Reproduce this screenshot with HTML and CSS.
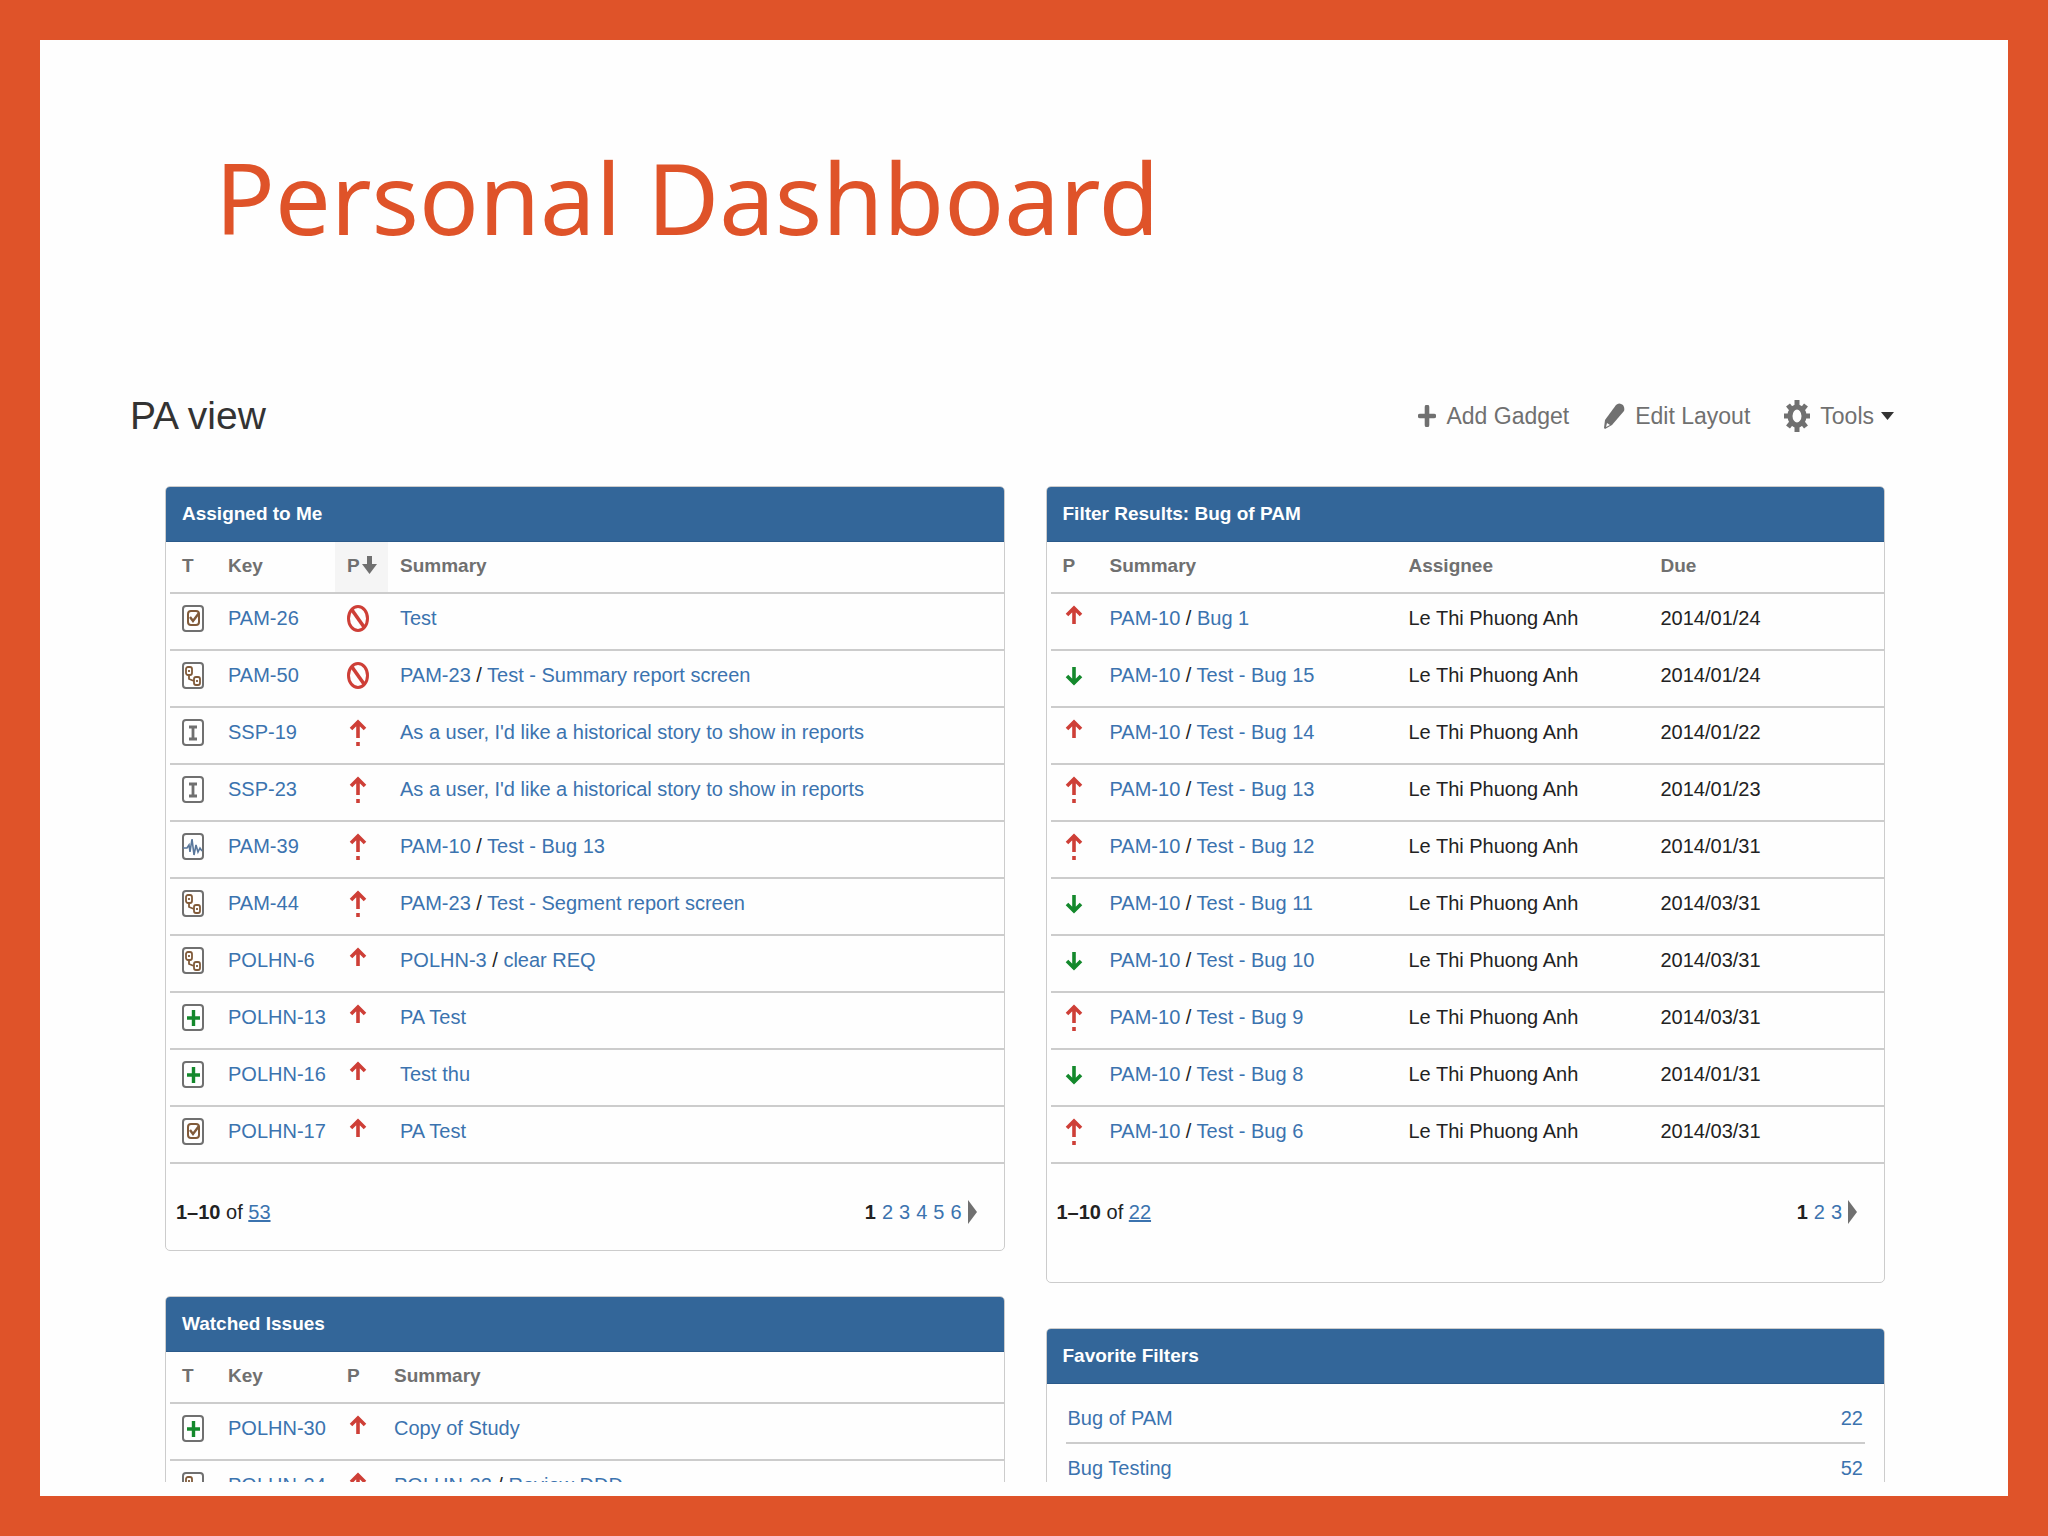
FILE: index.html
```html
<!DOCTYPE html>
<html lang="en">
<head>
    <meta charset="UTF-8">
    <meta name="viewport" content="width=device-width, initial-scale=1.0">
    <title>Personal Dashboard</title>
    <link rel="stylesheet" href="styles.css">
</head>
<body>

    <!-- icon set -->
    <svg class="sprite" aria-hidden="true">
        <symbol id="task" viewBox="0 0 22 27">
            <rect x="1" y="1" width="20" height="25" rx="3" fill="#fff" stroke="#707070" stroke-width="2"/>
            <rect x="6" y="6" width="11" height="14" rx="3" fill="none" stroke="#815b3a" stroke-width="2"/>
            <path d="M8 12l3 4 6-8" fill="none" stroke="#815b3a" stroke-width="2.4"/>
        </symbol>
        <symbol id="subtask" viewBox="0 0 22 27">
            <rect x="1" y="1" width="20" height="25" rx="3" fill="#fff" stroke="#707070" stroke-width="2"/>
            <rect x="4" y="5" width="6" height="8" rx="2" fill="none" stroke="#815b3a" stroke-width="1.8"/>
            <rect x="12" y="15" width="6" height="8" rx="2" fill="none" stroke="#815b3a" stroke-width="1.8"/>
            <path d="M7 13v4l5 2M7 8v2M15 18v2" fill="none" stroke="#815b3a" stroke-width="1.8"/>
        </symbol>
        <symbol id="story" viewBox="0 0 22 27">
            <rect x="1" y="1" width="20" height="25" rx="3" fill="#fff" stroke="#707070" stroke-width="2"/>
            <path d="M7 8h8M7 20h8M11 8v12" fill="none" stroke="#707070" stroke-width="2.8"/>
        </symbol>
        <symbol id="pulse" viewBox="0 0 22 27">
            <rect x="1" y="1" width="20" height="25" rx="3" fill="#fff" stroke="#707070" stroke-width="2"/>
            <path d="M1 15h4l2-3 1 7 2-13 2 16 2-10 2 7 2-4 2 3" fill="none" stroke="#59779b" stroke-width="1.6"/>
        </symbol>
        <symbol id="plus" viewBox="0 0 22 27">
            <rect x="1" y="1" width="20" height="25" rx="3" fill="#fff" stroke="#707070" stroke-width="2"/>
            <path d="M5 14h13M11.5 6v16" fill="none" stroke="#14892c" stroke-width="3.4"/>
        </symbol>
        <symbol id="blocker" viewBox="0 0 22 27">
            <ellipse cx="11" cy="13.5" rx="9.5" ry="12" fill="none" stroke="#ce3f37" stroke-width="3"/>
            <path d="M5 5l12 17" stroke="#ce3f37" stroke-width="3.6"/>
        </symbol>
        <symbol id="major" viewBox="0 0 22 27">
            <path d="M11 2v17M4 10l7-7 7 7" fill="none" stroke="#ce3f37" stroke-width="3.6"/>
        </symbol>
        <symbol id="critical" viewBox="0 0 22 27">
            <path d="M11 2v17M4 10l7-7 7 7M11 23v4" fill="none" stroke="#ce3f37" stroke-width="3.6"/>
        </symbol>
        <symbol id="minor" viewBox="0 0 22 27">
            <path d="M11 5v17M4 14l7 7 7-7" fill="none" stroke="#14892c" stroke-width="3.6"/>
        </symbol>
    </svg>

    <main class="slide">
        <h1>Personal Dashboard</h1>

        <header class="top-bar">
            <h2>PA view</h2>
            <div class="tools">
                <button type="button">
                    <svg width="18" height="22" viewBox="0 0 18 22"><path d="M9 2v18M2 11h14" stroke="#707070" stroke-width="4.6" stroke-linecap="round"/></svg>
                    Add Gadget
                </button>
                <button type="button">
                    <svg width="22" height="26" viewBox="0 0 22 26"><path d="M13 2q3-3 7 0q2 3 1 6L9 22l-7 4-1-1 1-8z" fill="#707070"/><path d="M4 20l3 2-4 2z" fill="#fff"/></svg>
                    Edit Layout
                </button>
                <button type="button">
                    <svg width="26" height="32" viewBox="0 0 26 32"><ellipse cx="13" cy="16" rx="7" ry="9" fill="none" stroke="#707070" stroke-width="5"/><path d="M13 0v6M13 26v6M0 16h5M21 16h5M4 5l4 5M22 5l-4 5M4 27l4-5M22 27l-4-5" stroke="#707070" stroke-width="5"/></svg>
                    Tools
                    <svg class="caret" width="13" height="8" viewBox="0 0 13 8"><path d="M0 0h13L6.500 8z" fill="#333"/></svg>
                </button>
            </div>
        </header>

        <div class="dashboard">
            <div class="column">
                <section class="gadget">
                    <h3>Assigned to Me</h3>
                    <table>
                        <thead>
                            <tr>
                                <th class="col-icon">T</th>
                                <th class="col-key">Key</th>
                                <th class="col-sorted">P<svg width="15" height="18" viewBox="0 0 15 18"><path d="M7.500 0v10" stroke="#707070" stroke-width="5"/><path d="M0 8h15L7.500 18z" fill="#707070"/></svg></th>
                                <th>Summary</th>
                            </tr>
                        </thead>
                        <tbody>
                            <tr><td><svg class="icon"><use href="#task"/></svg></td><td><a href="#">PAM-26</a></td><td><svg class="icon"><use href="#blocker"/></svg></td><td><a href="#">Test</a></td></tr>
                            <tr><td><svg class="icon"><use href="#subtask"/></svg></td><td><a href="#">PAM-50</a></td><td><svg class="icon"><use href="#blocker"/></svg></td><td><a href="#">PAM-23</a> / <a href="#">Test - Summary report screen</a></td></tr>
                            <tr><td><svg class="icon"><use href="#story"/></svg></td><td><a href="#">SSP-19</a></td><td><svg class="icon"><use href="#critical"/></svg></td><td><a href="#">As a user, I'd like a historical story to show in reports</a></td></tr>
                            <tr><td><svg class="icon"><use href="#story"/></svg></td><td><a href="#">SSP-23</a></td><td><svg class="icon"><use href="#critical"/></svg></td><td><a href="#">As a user, I'd like a historical story to show in reports</a></td></tr>
                            <tr><td><svg class="icon"><use href="#pulse"/></svg></td><td><a href="#">PAM-39</a></td><td><svg class="icon"><use href="#critical"/></svg></td><td><a href="#">PAM-10</a> / <a href="#">Test - Bug 13</a></td></tr>
                            <tr><td><svg class="icon"><use href="#subtask"/></svg></td><td><a href="#">PAM-44</a></td><td><svg class="icon"><use href="#critical"/></svg></td><td><a href="#">PAM-23</a> / <a href="#">Test - Segment report screen</a></td></tr>
                            <tr><td><svg class="icon"><use href="#subtask"/></svg></td><td><a href="#">POLHN-6</a></td><td><svg class="icon"><use href="#major"/></svg></td><td><a href="#">POLHN-3</a> / <a href="#">clear REQ</a></td></tr>
                            <tr><td><svg class="icon"><use href="#plus"/></svg></td><td><a href="#">POLHN-13</a></td><td><svg class="icon"><use href="#major"/></svg></td><td><a href="#">PA Test</a></td></tr>
                            <tr><td><svg class="icon"><use href="#plus"/></svg></td><td><a href="#">POLHN-16</a></td><td><svg class="icon"><use href="#major"/></svg></td><td><a href="#">Test thu</a></td></tr>
                            <tr><td><svg class="icon"><use href="#task"/></svg></td><td><a href="#">POLHN-17</a></td><td><svg class="icon"><use href="#major"/></svg></td><td><a href="#">PA Test</a></td></tr>
                        </tbody>
                    </table>
                    <footer>
                        <span><b>1–10</b> of <a class="total" href="#">53</a></span>
                        <nav><b>1</b> <a href="#">2</a> <a href="#">3</a> <a href="#">4</a> <a href="#">5</a> <a href="#">6</a><a class="next" href="#" aria-label="Next"></a></nav>
                    </footer>
                </section>

                <section class="gadget">
                    <h3>Watched Issues</h3>
                    <table>
                        <thead>
                            <tr>
                                <th class="col-icon">T</th>
                                <th class="col-key">Key</th>
                                <th class="col-priority">P</th>
                                <th>Summary</th>
                            </tr>
                        </thead>
                        <tbody>
                            <tr><td><svg class="icon"><use href="#plus"/></svg></td><td><a href="#">POLHN-30</a></td><td><svg class="icon"><use href="#major"/></svg></td><td><a href="#">Copy of Study</a></td></tr>
                            <tr><td><svg class="icon"><use href="#subtask"/></svg></td><td><a href="#">POLHN-24</a></td><td><svg class="icon"><use href="#major"/></svg></td><td><a href="#">POLHN-22</a> / <a href="#">Review DDD</a></td></tr>
                        </tbody>
                    </table>
                </section>
            </div>

            <div class="column">
                <section class="gadget">
                    <h3>Filter Results: Bug of PAM</h3>
                    <table>
                        <thead>
                            <tr>
                                <th class="col-priority">P</th>
                                <th class="col-summary">Summary</th>
                                <th class="col-assignee">Assignee</th>
                                <th>Due</th>
                            </tr>
                        </thead>
                        <tbody>
                            <tr><td><svg class="icon"><use href="#major"/></svg></td><td><a href="#">PAM-10</a> / <a href="#">Bug 1</a></td><td>Le Thi Phuong Anh</td><td>2014/01/24</td></tr>
                            <tr><td><svg class="icon"><use href="#minor"/></svg></td><td><a href="#">PAM-10</a> / <a href="#">Test - Bug 15</a></td><td>Le Thi Phuong Anh</td><td>2014/01/24</td></tr>
                            <tr><td><svg class="icon"><use href="#major"/></svg></td><td><a href="#">PAM-10</a> / <a href="#">Test - Bug 14</a></td><td>Le Thi Phuong Anh</td><td>2014/01/22</td></tr>
                            <tr><td><svg class="icon"><use href="#critical"/></svg></td><td><a href="#">PAM-10</a> / <a href="#">Test - Bug 13</a></td><td>Le Thi Phuong Anh</td><td>2014/01/23</td></tr>
                            <tr><td><svg class="icon"><use href="#critical"/></svg></td><td><a href="#">PAM-10</a> / <a href="#">Test - Bug 12</a></td><td>Le Thi Phuong Anh</td><td>2014/01/31</td></tr>
                            <tr><td><svg class="icon"><use href="#minor"/></svg></td><td><a href="#">PAM-10</a> / <a href="#">Test - Bug 11</a></td><td>Le Thi Phuong Anh</td><td>2014/03/31</td></tr>
                            <tr><td><svg class="icon"><use href="#minor"/></svg></td><td><a href="#">PAM-10</a> / <a href="#">Test - Bug 10</a></td><td>Le Thi Phuong Anh</td><td>2014/03/31</td></tr>
                            <tr><td><svg class="icon"><use href="#critical"/></svg></td><td><a href="#">PAM-10</a> / <a href="#">Test - Bug 9</a></td><td>Le Thi Phuong Anh</td><td>2014/03/31</td></tr>
                            <tr><td><svg class="icon"><use href="#minor"/></svg></td><td><a href="#">PAM-10</a> / <a href="#">Test - Bug 8</a></td><td>Le Thi Phuong Anh</td><td>2014/01/31</td></tr>
                            <tr><td><svg class="icon"><use href="#critical"/></svg></td><td><a href="#">PAM-10</a> / <a href="#">Test - Bug 6</a></td><td>Le Thi Phuong Anh</td><td>2014/03/31</td></tr>
                        </tbody>
                    </table>
                    <footer class="tall">
                        <span><b>1–10</b> of <a class="total" href="#">22</a></span>
                        <nav><b>1</b> <a href="#">2</a> <a href="#">3</a><a class="next" href="#" aria-label="Next"></a></nav>
                    </footer>
                </section>

                <section class="gadget">
                    <h3>Favorite Filters</h3>
                    <ul>
                        <li><a href="#">Bug of PAM</a><a href="#">22</a></li>
                        <li><a href="#">Bug Testing</a><a href="#">52</a></li>
                    </ul>
                </section>
            </div>
        </div>
    </main>

</body>
</html>
```
FILE: styles.css
```css
* { box-sizing: border-box; }
body {
    margin: 0;
    font-family: "Liberation Sans", Arial, sans-serif;
    font-size: 20px;
    line-height: 28px;
    color: #222;
}
h1, h2, h3, ul { margin: 0; }
a { color: #3b73af; text-decoration: none; }
.sprite { position: absolute; width: 0; height: 0; }

/* orange frame around the whole page */
.slide {
    display: flex;
    flex-direction: column;
    height: 100vh;
    padding: 92px 114px 14px 90px;
    border: 40px solid #df5329;
    background-color: #fefefe;
    overflow: hidden;
}
h1 {
    padding-left: 85px;
    font-family: "Noto Sans", sans-serif;
    font-size: 99px;
    font-weight: normal;
    line-height: 130px;
    color: #df5329;
}

.top-bar {
    display: flex;
    justify-content: space-between;
    align-items: center;
    margin-top: 124px;
    height: 60px;
}
h2 { font-size: 39px; font-weight: normal; line-height: 60px; color: #333; }
.tools { display: flex; gap: 34px; }
button {
    display: flex;
    align-items: center;
    gap: 10px;
    padding: 0;
    border: none;
    background: none;
    font-family: inherit;
    font-size: 23px;
    line-height: 32px;
    color: #707070;
    cursor: pointer;
}
.caret { margin-left: -3px; }

.dashboard {
    display: grid;
    grid-template-columns: 1fr 1fr;
    gap: 41px;
    flex: 1;
    min-height: 0;
    margin-top: 40px;
    padding: 0 9px 0 35px;
    overflow: hidden;
}
.column { display: flex; flex-direction: column; gap: 45px; }
.gadget { border: 1px solid #ccc; border-radius: 5px; }
h3 {
    padding: 13px 16px;
    border-bottom: 1px solid #2b5a8a;
    border-radius: 4px 4px 0 0;
    background-color: #369;
    font-size: 19px;
    line-height: 28px;
    color: #fff;
}

table { width: calc(100% - 4px); margin-left: 4px; border-collapse: collapse; table-layout: fixed; }
th, td { padding: 10px 0 0 12px; border-bottom: 2px solid #ccc; text-align: left; vertical-align: top; white-space: nowrap; }
th { height: 51px; font-size: 19px; color: #707070; }
td { height: 57px; }
.col-icon { width: 46px; }
.col-key { width: 119px; }
.col-sorted { width: 53px; background-color: #f5f5f5; }
.col-sorted svg { margin-left: 2px; vertical-align: -2px; }
.col-priority { width: 47px; }
.col-summary { width: 299px; }
.col-assignee { width: 252px; }
.icon { display: block; width: 22px; height: 27px; margin-top: 1px; }

footer { display: flex; justify-content: space-between; padding: 34px 27px 24px 10px; }
footer.tall { padding-bottom: 56px; }
.total { text-decoration: underline; }
nav { display: flex; gap: 6px; }
.next { align-self: center; border: 12px solid transparent; border-left: 9px solid #707070; border-right: none; }

ul { padding: 10px 19px; list-style: none; }
li { display: flex; justify-content: space-between; padding: 10px 2px; border-bottom: 2px solid #ccc; }
```
